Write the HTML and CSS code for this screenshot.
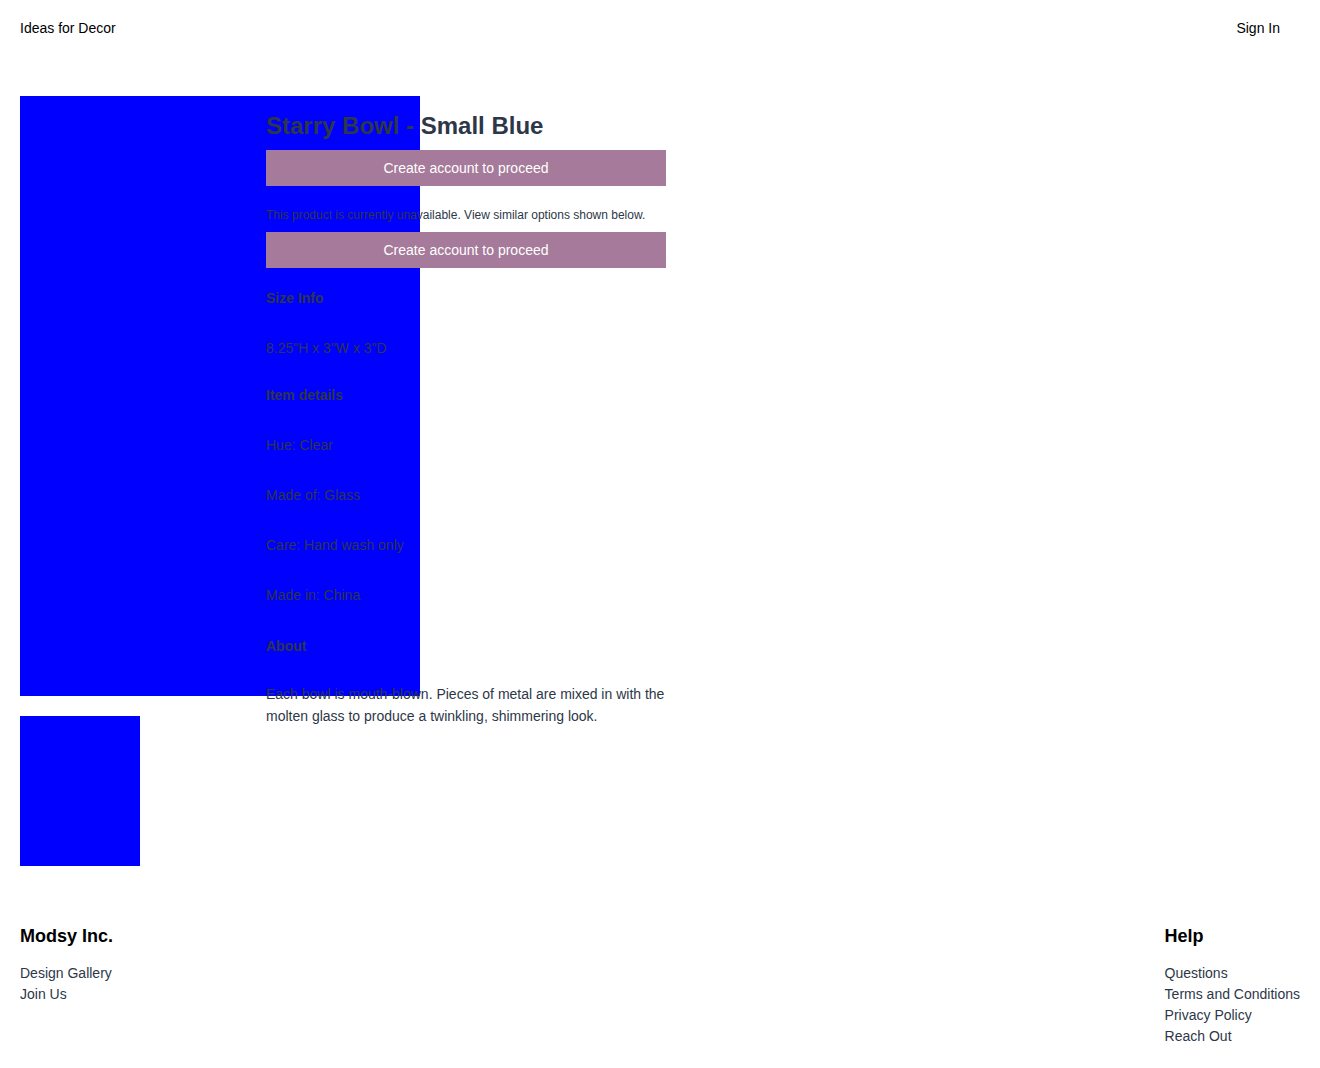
FILE: index.html
```html
<!DOCTYPE html>
<html lang="en">
<head>
    <meta charset="UTF-8">
    <meta name="viewport" content="width=device-width, initial-scale=1.0">
    <title>Starry Bowl - Small Blue | Ideas for Decor</title>
    <link rel="stylesheet" href="styles.css">
</head>
<body>
    <header class="site-header">
        <a class="brand" href="/">Ideas for Decor</a>
        <a class="sign-in" href="/login">Sign In</a>
    </header>

    <main class="product">
        <div class="gallery">
            <div class="photo-main"></div>
            <div class="photo-thumb"></div>
        </div>

        <div class="details">
            <h1 class="title">Starry Bowl - Small Blue</h1>
            <button class="cta" type="button">Create account to proceed</button>
            <p class="notice">This product is currently unavailable. View similar options shown below.</p>
            <button class="cta" type="button">Create account to proceed</button>

            <div class="specs">
                <h3 class="spec-label">Size Info</h3>
                <p class="spec-value">8.25"H x 3"W x 3"D</p>

                <h3 class="spec-label">Item details</h3>
                <p class="spec-value">Hue: Clear</p>
                <p class="spec-value">Made of: Glass</p>
                <p class="spec-value">Care: Hand wash only</p>
                <p class="spec-value">Made in: China</p>

                <h3 class="spec-label about">About</h3>
                <p class="about-text">Each bowl is mouth-blown. Pieces of metal are mixed in with the molten glass to produce a twinkling, shimmering look.</p>
            </div>
        </div>
    </main>

    <footer class="site-footer">
        <div class="footer-col">
            <h4>Modsy Inc.</h4>
            <a href="/gallery">Design Gallery</a>
            <a href="/join">Join Us</a>
        </div>
        <div class="footer-col">
            <h4>Help</h4>
            <a href="/faq">Questions</a>
            <a href="/terms">Terms and Conditions</a>
            <a href="/privacy">Privacy Policy</a>
            <a href="/contact">Reach Out</a>
        </div>
    </footer>
</body>
</html>
```

FILE: styles.css
```css
body {
    margin: 0;
    font-family: "Liberation Sans", Arial, sans-serif;
    font-size: 14px;
    color: #2d3748;
    background: #fff;
}
a {
    text-decoration: none;
}

/* header */
.site-header {
    display: flex;
    justify-content: space-between;
    padding: 20px;
    line-height: 16px;
}
.site-header a {
    color: #000;
}
.sign-in {
    padding-right: 20px;
}

/* product */
.product {
    display: flex;
    gap: 20px;
    padding: 40px 20px;
}
.gallery {
    width: 226px;
    flex-shrink: 0;
}
.photo-main {
    width: 400px;
    height: 600px;
    background: #0000ff;
    margin-bottom: 20px;
}
.photo-thumb {
    width: 120px;
    height: 150px;
    background: #0000ff;
}
.details {
    width: 400px;
}
.title {
    font-size: 24px;
    line-height: 28px;
    margin: 16px 0 10px;
}
.cta {
    display: block;
    width: 100%;
    height: 36px;
    border: 0;
    background: #a67a9a;
    color: #fff;
    font-family: inherit;
    font-size: 14px;
    padding: 0;
}
.notice {
    font-size: 12px;
    line-height: 14px;
    margin: 22px 0 10px;
}

.specs {
    line-height: 22px;
}
.spec-label {
    font-size: 14px;
    margin: 25px 0 28px;
}
.spec-label:first-child {
    margin-top: 19px;
}
.spec-label.about {
    margin: 29px 0 26px;
}
.spec-value {
    margin: 28px 0 0;
}
.about-text {
    margin: 0;
}

/* footer */
.site-footer {
    display: flex;
    justify-content: space-between;
    padding: 20px;
}
.footer-col h4 {
    color: #000;
    font-size: 18px;
    line-height: 21px;
    margin: 0 0 16px;
}
.footer-col a {
    display: block;
    color: #2d3748;
    line-height: 21px;
}
```
